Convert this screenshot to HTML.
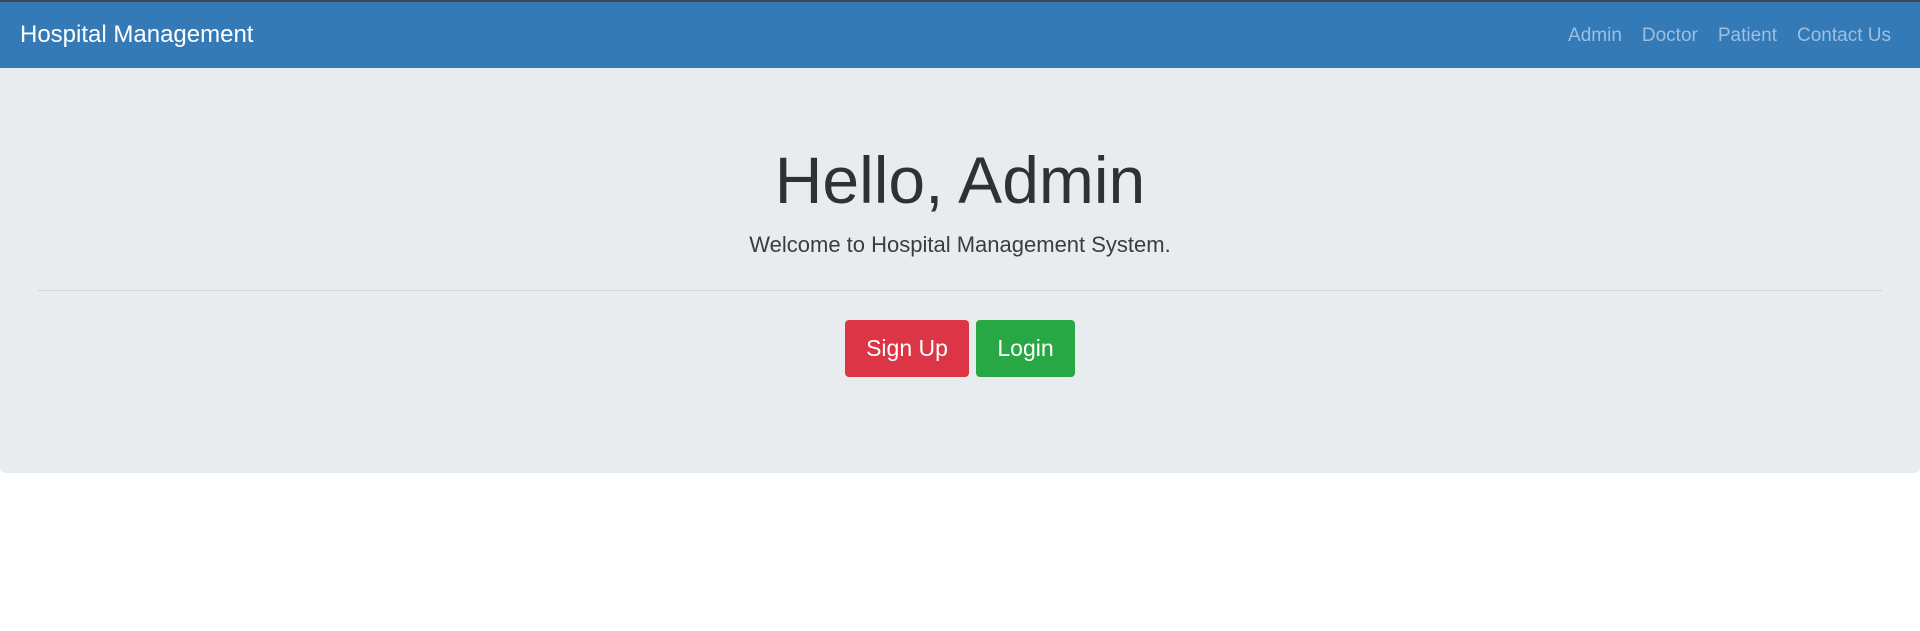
<!DOCTYPE html>
<html><head><style>
*{margin:0;padding:0;box-sizing:border-box}
body{width:1920px;height:631px;background:#fff;font-family:"Liberation Sans",sans-serif;position:relative;overflow:hidden}
.nav{position:absolute;left:0;top:0;width:1920px;height:68px;background:#337ab7;border-top:2px solid #3a4a5a}
.brand{position:absolute;left:20px;top:19px;color:#fff;font-size:24px}
.links{position:absolute;right:29px;top:23px;font-size:19px;color:#9dbfe0}
.links span{margin-left:20px}
.jumbo{position:absolute;left:0;top:68px;width:1920px;height:405px;background:#e9ecef;border-radius:0 0 5px 5px}
h1{position:absolute;left:0;width:1920px;top:74px;text-align:center;font-weight:300;font-size:66px;color:#2e3236}
.sub{position:absolute;left:0;width:1920px;top:164px;text-align:center;font-size:22px;color:#3a3d40;font-weight:300}
.hr{position:absolute;left:38px;width:1844px;top:222px;height:1px;background:#d3d6d9}
.btn{position:absolute;top:252px;height:57px;border-radius:4px;color:#fff;font-size:23px;text-align:center;line-height:57px}
</style></head><body>
<div class="nav"><div class="brand">Hospital Management</div>
<div class="links"><span>Admin</span><span>Doctor</span><span>Patient</span><span>Contact Us</span></div></div>
<div class="jumbo">
<h1>Hello, Admin</h1>
<div class="sub">Welcome to Hospital Management System.</div>
<div class="hr"></div>
<div class="btn" style="left:845px;width:124px;background:#dc3545">Sign Up</div>
<div class="btn" style="left:976px;width:99px;background:#28a745">Login</div>
</div>
</body></html>
